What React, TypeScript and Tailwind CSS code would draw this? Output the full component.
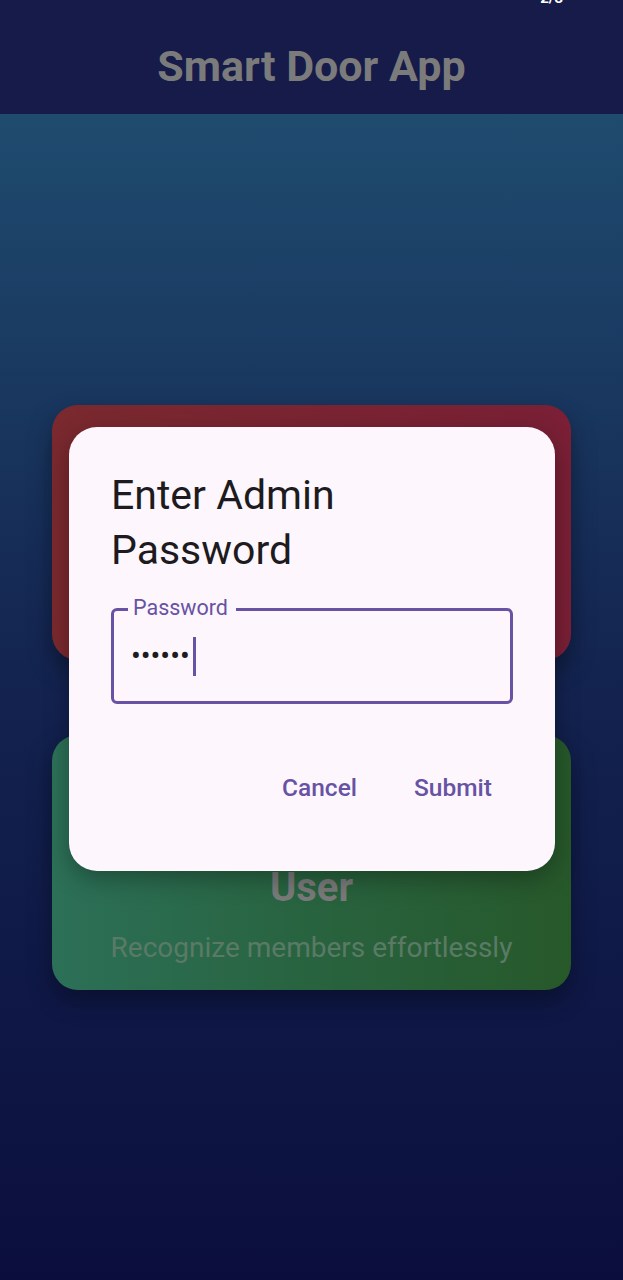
export default function App() {
  return (
    <div
      className="relative flex flex-col w-full h-[1280px] overflow-hidden"
      style={{ fontFamily: 'Roboto, "Noto Sans", sans-serif' }}
    >
      <span className="absolute top-[-13px] right-[60px] text-[15px] font-bold text-white">2/3</span>

      <header className="h-[114px] shrink-0 bg-[#161b4a] flex items-center justify-center pt-[18px]">
        <h1 className="text-[43px] font-bold text-[#7b7b7b] leading-none">Smart Door App</h1>
      </header>

      <main className="flex-1 bg-gradient-to-b from-[#1f4b6f] via-[#13224f] to-[#0b0e3d] px-[52px] pt-[291px] flex flex-col gap-[75px]">
        <div className="h-[255px] rounded-[26px] bg-gradient-to-r from-[#7a292e] to-[#7a1f36] shadow-[0_10px_24px_rgba(0,0,0,0.35)]" />

        <div className="h-[255px] rounded-[26px] bg-gradient-to-r from-[#2c7058] via-[#28633f] to-[#27582a] shadow-[0_10px_24px_rgba(0,0,0,0.35)] flex flex-col items-center pt-[130px]">
          <div className="text-[40px] font-bold text-[#7a7a7a] leading-[46px]">User</div>
          <div className="mt-[20px] text-[28px] text-[#5b7a66] leading-[34px]">Recognize members effortlessly</div>
        </div>
      </main>

      <div className="absolute left-[69px] top-[427px] w-[486px] h-[444px] rounded-[28px] bg-[#fdf7fd] px-[42px] pt-[41px] shadow-[0_8px_24px_rgba(0,0,0,0.3)]">
        <h2 className="text-[41px] leading-[55px] text-[#1d1b20] w-[300px]">Enter Admin Password</h2>

        <div className="relative mt-[30px] h-[96px] rounded-[6px] border-[3px] border-[#6852a3] flex items-center pl-[17px]">
          <span className="absolute left-[14px] top-[-14px] pl-[5px] pr-[8px] bg-[#fdf7fd] text-[21.5px] leading-[22px] text-[#6852a3]">
            Password
          </span>
          <span className="text-[29px] text-[#1d1b20] leading-none">••••••</span>
          <span className="inline-block w-[3px] h-[39px] bg-[#6852a3] ml-[3px]" />
        </div>

        <div className="mt-[49px] flex justify-end gap-[15px]">
          <button className="h-[70px] px-[21px] text-[24.5px] font-medium text-[#6852a3]">Cancel</button>
          <button className="h-[70px] px-[21px] text-[24.5px] font-medium text-[#6852a3]">Submit</button>
        </div>
      </div>
    </div>
  );
}
